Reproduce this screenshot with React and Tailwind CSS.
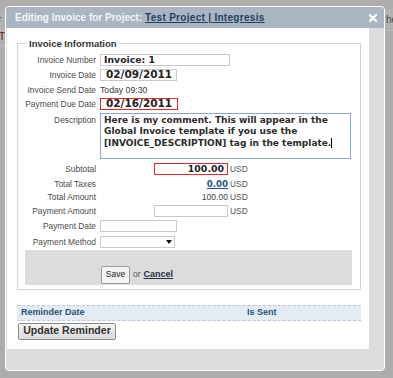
const LABEL = "w-[78px] shrink-0 text-right text-[8.4px] text-[#4a4a4a] leading-none";
const SANS = { fontFamily: '"Liberation Sans", Arial, sans-serif' };
const DV = { fontFamily: '"DejaVu Sans", Verdana, sans-serif' };

function Row({ mt, h, label, top, children }) {
  return (
    <div className={`flex ${top ? "items-start" : "items-center"} ${mt} ${h}`}>
      <div className={`${LABEL} ${top ? "pt-[3px]" : ""}`}>{label}</div>
      <div className="ml-[4px] flex items-center h-full">{children}</div>
    </div>
  );
}

export default function App() {
  return (
    <div className="relative w-[393px] h-[378px] overflow-hidden bg-[#adadad]" style={SANS}>
      {/* underlying page, dimmed */}
      <div className="absolute left-0 top-[9px] w-full h-[22px] bg-[#b2b2b2] border-b border-[#bdbdbd]" />
      <span className="absolute left-[-2px] top-[15px] text-[10px] leading-none text-[#3b4756]">r</span>
      <span className="absolute left-[386px] top-[15px] text-[10px] leading-none text-[#3b4756]">he</span>
      <span className="absolute left-[-1px] top-[32px] text-[10px] leading-none text-[#6e1c1c]">T</span>
      <div className="absolute left-0 top-[45px] w-[5px] h-px bg-[#bcbcbc]" />

      {/* dialog */}
      <div className="absolute left-[5px] top-[6px] w-[380px] h-[365px] rounded-[4px] border border-white bg-[#dcdcdc] flex flex-col">
        {/* title bar */}
        <div className="h-[21px] shrink-0 rounded-t-[3px] bg-[#a9b6c1] flex items-center pl-[9px] pr-[7px]">
          <div className="text-[10px] font-bold text-[#f3f5f7] leading-none whitespace-nowrap">
            Editing Invoice for Project:{" "}
            <span className="text-[#233f60] underline tracking-[0.3px]">Test Project | Integresis</span>
          </div>
          <div className="ml-auto">
            <svg width="8" height="8" viewBox="0 0 8 8">
              <path d="M1 1 L7 7 M7 1 L1 7" stroke="#ffffff" strokeWidth="2.3" strokeLinecap="square" />
            </svg>
          </div>
        </div>

        {/* content */}
        <div className="ml-[1px] w-[362px] h-[321px] bg-white pl-[10px] pr-[8px] flex flex-col">
          <fieldset className="mt-[10px] w-[344px] border border-[#d3d3d3] pb-[4px]">
            <legend className="ml-[9px] px-[2px] text-[9.5px] font-bold text-[#333] leading-[11px]">
              Invoice Information
            </legend>

            <Row mt="mt-[5px]" h="h-[12px]" label="Invoice Number">
              <div className="w-[130px] h-[12px] border border-[#c9c9c9] pl-[3px] flex items-center text-[9.3px] font-bold text-[#222]" style={DV}>
                Invoice: 1
              </div>
            </Row>
            <Row mt="mt-[3px]" h="h-[12px]" label="Invoice Date">
              <div className="w-[77px] h-[12px] border border-[#c9c9c9] pl-[5px] flex items-center text-[10.5px] font-bold text-[#222]" style={DV}>
                02/09/2011
              </div>
            </Row>
            <Row mt="mt-[3px]" h="h-[12px]" label="Invoice Send Date">
              <span className="text-[8.7px] text-[#3a3a3a] leading-none">Today 09:30</span>
            </Row>
            <Row mt="mt-[2px]" h="h-[12px]" label="Payment Due Date">
              <div className="w-[78px] h-[12px] border border-[#e0292b] pl-[5px] flex items-center text-[10.5px] font-bold text-[#222]" style={DV}>
                02/16/2011
              </div>
            </Row>
            <Row mt="mt-[3px]" h="h-[46px]" label="Description" top>
              <div className="w-[251px] h-[46px] border border-[#82a9cf] pl-[3px] pt-[1px] text-[9px] font-bold text-[#2b2b2b] leading-[11.3px] whitespace-nowrap self-start" style={DV}>
                Here is my comment. This will appear in the
                <br />
                Global Invoice template if you use the
                <br />
                [INVOICE_DESCRIPTION] tag in the template.
                <span className="inline-block w-px h-[10px] bg-black align-middle" />
              </div>
            </Row>
            <Row mt="mt-[4px]" h="h-[12px]" label="Subtotal">
              <div className="ml-[54px] w-[74px] h-[12px] border border-[#e0292b] pr-[3px] flex items-center justify-end text-[9.4px] font-bold text-[#222]" style={DV}>
                100.00
              </div>
              <span className="ml-[2px] text-[8.4px] text-[#555]">USD</span>
            </Row>
            <Row mt="mt-[3px]" h="h-[12px]" label="Total Taxes">
              <div className="ml-[54px] w-[74px] flex justify-end text-[8.6px] font-bold text-[#2a5684] underline leading-none" style={DV}>
                0.00
              </div>
              <span className="ml-[2px] text-[8.4px] text-[#555]">USD</span>
            </Row>
            <Row mt="mt-[1px]" h="h-[12px]" label="Total Amount">
              <div className="ml-[54px] w-[74px] flex justify-end text-[8.6px] text-[#444] leading-none">
                100.00
              </div>
              <span className="ml-[2px] text-[8.4px] text-[#555]">USD</span>
            </Row>
            <Row mt="mt-[2px]" h="h-[12px]" label="Payment Amount">
              <div className="ml-[54px] w-[74px] h-[12px] border border-[#c9c9c9]" />
              <span className="ml-[2px] text-[8.4px] text-[#555]">USD</span>
            </Row>
            <Row mt="mt-[3px]" h="h-[12px]" label="Payment Date">
              <div className="w-[77px] h-[12px] border border-[#c9c9c9]" />
            </Row>
            <Row mt="mt-[4px]" h="h-[12px]" label="Payment Method">
              <div className="w-[75px] h-[12px] border border-[#c9c9c9] flex items-center justify-end pr-[2px]">
                <svg width="6" height="4" viewBox="0 0 6 4">
                  <path d="M0 0 H6 L3 4 Z" fill="#111" />
                </svg>
              </div>
            </Row>

            <div className="mt-[2px] ml-[7px] w-[327px] h-[35px] bg-[#dcdcdc] flex items-end pb-[1.5px]">
              <div className="ml-[76px] w-[29px] h-[18px] border border-[#9a9a9a] rounded-[2px] bg-[#f3f3f3] flex items-center justify-center text-[8.5px] text-[#222]">
                Save
              </div>
              <div className="ml-[3px] h-[18px] flex items-center">
                <span className="text-[8.5px] text-[#555]">or</span>
                <span className="ml-[3px] text-[9px] font-bold text-[#1f2e44] underline">Cancel</span>
              </div>
            </div>
          </fieldset>

          <div className="mt-[15px] w-[344px] h-[16px] bg-[#e3ebf4] border-y border-dashed border-[#bccbdb] flex items-center text-[9px] font-bold text-[#2c4f74]">
            <div className="w-[230px] pl-[4px]">Reminder Date</div>
            <div>Is Sent</div>
          </div>
          <div className="mt-[1.5px] ml-[1px] w-[98px] h-[17px] border border-[#8a8a8a] rounded-[2px] bg-gradient-to-b from-[#f4f4f4] to-[#dadada] flex items-center justify-center text-[10.6px] font-bold text-[#333]">
            Update Reminder
          </div>
        </div>
      </div>
    </div>
  );
}
